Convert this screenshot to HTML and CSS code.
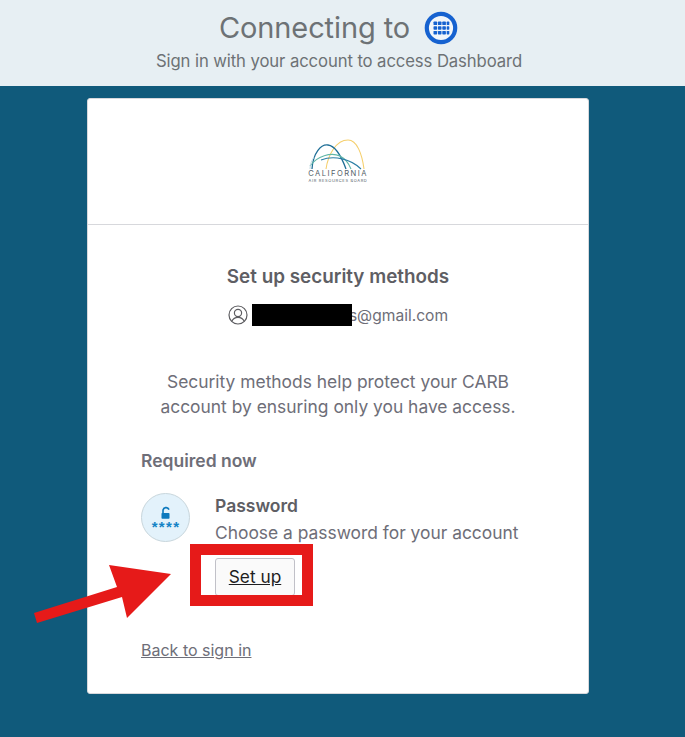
FILE: index.html
```html
<!DOCTYPE html>
<html lang="en">
<head>
<meta charset="utf-8">
<title>Set up security methods</title>
<link rel="stylesheet" href="styles.css">
</head>
<body>
<header class="top">
  <div class="top-title">
    <span>Connecting to</span>
    <svg class="app-icon" viewBox="0 0 34 34" width="34" height="34" aria-hidden="true">
      <circle cx="17" cy="17" r="14.2" fill="#f2f6fa" stroke="#1662d0" stroke-width="4.2"/>
      <g fill="#1662d0">
        <rect x="9.5" y="10.5" width="3.6" height="3.6" rx=".7"/><rect x="13.9" y="10.5" width="3.6" height="3.6" rx=".7"/><rect x="18.3" y="10.5" width="3.6" height="3.6" rx=".7"/><rect x="22.7" y="10.5" width="2.6" height="3.6" rx=".7"/>
        <rect x="9.5" y="15.2" width="3.6" height="3.6" rx=".7"/><rect x="13.9" y="15.2" width="3.6" height="3.6" rx=".7"/><rect x="18.3" y="15.2" width="3.6" height="3.6" rx=".7"/><rect x="22.7" y="15.2" width="2.6" height="3.6" rx=".7"/>
        <rect x="9.5" y="19.9" width="3.6" height="3.6" rx=".7"/><rect x="13.9" y="19.9" width="3.6" height="3.6" rx=".7"/><rect x="18.3" y="19.9" width="3.6" height="3.6" rx=".7"/><rect x="22.7" y="19.9" width="2.6" height="3.6" rx=".7"/>
      </g>
    </svg>
  </div>
  <div class="top-sub">Sign in with your account to access Dashboard</div>
</header>

<main class="card">
  <div class="card-head">
    <div class="logo">
      <svg viewBox="0 0 62 34" width="62" height="34" aria-hidden="true" fill="none">
        <path d="M19 30C21 16 29 1 41 1C50 1 55 15 57 30" stroke="#f5cf6c" stroke-width="1.1"/>
        <path d="M5 30C6 14 14 5 21 6C29 7 35 19 39 30" stroke="#1f6f97" stroke-width="1.3"/>
        <path d="M3 27C10 17 24 13 33 17C39 20 42 25 44 30" stroke="#62b7a8" stroke-width="1.1"/>
        <path d="M14 21C27 16 44 20 54 30" stroke="#2a7ea5" stroke-width="1.1"/>
        <path d="M3 30C3 25 5 21 7 18" stroke="#c4dbe5" stroke-width="1"/>
      </svg>
      <div class="logo-name">CALIFORNIA</div>
      <div class="logo-sub">AIR RESOURCES BOARD</div>
    </div>
  </div>
  <div class="card-body">
    <h1 class="title">Set up security methods</h1>
    <div class="identity">
      <svg viewBox="0 0 20 20" width="20" height="20" aria-hidden="true" fill="none" stroke="#5d5d61" stroke-width="1.2">
        <circle cx="10" cy="10" r="9"/>
        <circle cx="10" cy="8" r="3.6"/>
        <path d="M3.8 16.3C5 13.6 7.2 12.3 10 12.3s5 1.3 6.2 4"/>
      </svg>
      <span class="email"><span class="redact"></span>s@gmail.com</span>
    </div>
    <p class="intro">Security methods help protect your CARB account by ensuring only you have access.</p>
    <h2 class="section">Required now</h2>
    <div class="method">
      <div class="badge">
        <svg viewBox="0 0 50 50" width="50" height="50" aria-hidden="true">
          <path d="M22 20.6v-3a3.1 3.1 0 0 1 6-1" fill="none" stroke="#0d79bd" stroke-width="1.6"/>
          <rect x="20.5" y="20" width="8" height="5.8" rx=".8" fill="#0d79bd"/>
          <text class="stars" x="25" y="39" text-anchor="middle">****</text>
        </svg>
      </div>
      <div class="method-text">
        <div class="method-name">Password</div>
        <div class="method-desc">Choose a password for your account</div>
        <a class="btn">Set up</a>
      </div>
    </div>
    <a class="back">Back to sign in</a>
  </div>
</main>

<div class="callout"></div>
<svg class="arrow" viewBox="0 0 685 737" width="685" height="737" aria-hidden="true">
  <polygon points="34,613 37,623 122,597 127,618 171,574 109,565 117,587" fill="#e61a19"/>
</svg>
</body>
</html>
```

FILE: styles.css
```css
* { box-sizing: border-box; }
html, body { margin: 0; height: 737px; overflow: hidden; }
body {
  position: relative;
  background: #105a7b;
  font-family: Inter, "Liberation Sans", sans-serif;
  color: #6e6e78;
}
.top {
  height: 86px;
  background: #e7eff3;
  display: flex;
  flex-direction: column;
  align-items: center;
  padding-top: 10px;
  color: #6d7275;
}
.top-title {
  display: flex;
  align-items: center;
  gap: 14px;
  height: 36px;
  margin-right: 8px;
  font-size: 29px;
  line-height: 36px;
  letter-spacing: -.1px;
}
.top-sub {
  margin: 4px 7px 0 0;
  font-size: 16.7px;
  line-height: 22px;
  letter-spacing: -.1px;
}
.card {
  width: 502px;
  height: 596px;
  margin: 12px 0 0 87px;
  background: #fff;
  border: 1px solid #d7d8dc;
  border-radius: 3px;
}
.card-head {
  height: 126px;
  border-bottom: 1px solid #d7d8dc;
  display: flex;
  justify-content: center;
  padding-top: 40px;
}
.logo {
  width: 62px;
  display: flex;
  flex-direction: column;
  align-items: center;
  color: #55626a;
  text-align: center;
  line-height: 1;
}
.logo svg { display: block; margin-bottom: -3px; }
.logo-name { font-size: 7.6px; letter-spacing: 1.45px; white-space: nowrap; }
.logo-sub { font-size: 4px; letter-spacing: .65px; white-space: nowrap; margin-top: 1px; }
.card-body { padding: 39px 53px 0; }
.title {
  margin: 0;
  text-align: center;
  font-size: 18.85px;
  line-height: 26px;
  font-weight: 600;
  color: #5e5e64;
}
.identity {
  margin-top: 13px;
  display: flex;
  justify-content: center;
  align-items: center;
  gap: 4px;
  height: 24px;
  font-size: 15.6px;
}
.email { display: flex; align-items: center; color: #6e6e78; }
.redact {
  width: 100px;
  height: 22px;
  background: #000;
  margin-right: -3px;
  position: relative;
}
.intro {
  margin: 42px 0 0;
  text-align: center;
  font-size: 17.4px;
  line-height: 25px;
  color: #6e6e78;
  padding: 0 10px;
}
.section {
  margin: 30px 0 0;
  font-size: 17.5px;
  line-height: 24px;
  font-weight: 600;
  color: #6e6e78;
}
.method { display: flex; gap: 25px; margin-top: 20px; }
.badge {
  flex: none;
  width: 49px;
  height: 49px;
  border-radius: 50%;
  background: #e3f2fb;
  border: 1px solid #c8d6dc;
  display: flex;
  align-items: center;
  justify-content: center;
}
.badge svg { flex: none; }
.stars { font-size: 15px; font-weight: 700; letter-spacing: 1.3px; fill: #1483c6; font-family: "Liberation Sans", sans-serif; }
.method-text { flex: 1; }
.method-name {
  font-size: 17.5px;
  line-height: 24px;
  font-weight: 600;
  color: #5e5e64;
  margin-top: 1px;
}
.method-desc { font-size: 17.4px; line-height: 26px; color: #6e6e78; margin-top: 2px; white-space: nowrap; }
.btn {
  display: inline-block;
  width: 80px;
  height: 38px;
  margin-top: 12px;
  border: 1px solid #c1c1c8;
  border-radius: 3px;
  background: #fafafa;
  color: #1d1d21;
  font-size: 17.3px;
  line-height: 36px;
  text-align: center;
  text-decoration: underline;
}
.back {
  display: block;
  margin-top: 42px;
  font-size: 16px;
  line-height: 24px;
  color: #6e6e78;
  text-decoration: underline;
}
.callout {
  position: absolute;
  left: 190px;
  top: 544px;
  width: 123px;
  height: 62px;
  border: 11.5px solid #e61a19;
  pointer-events: none;
}
.arrow { position: absolute; left: 0; top: 0; pointer-events: none; }
```
